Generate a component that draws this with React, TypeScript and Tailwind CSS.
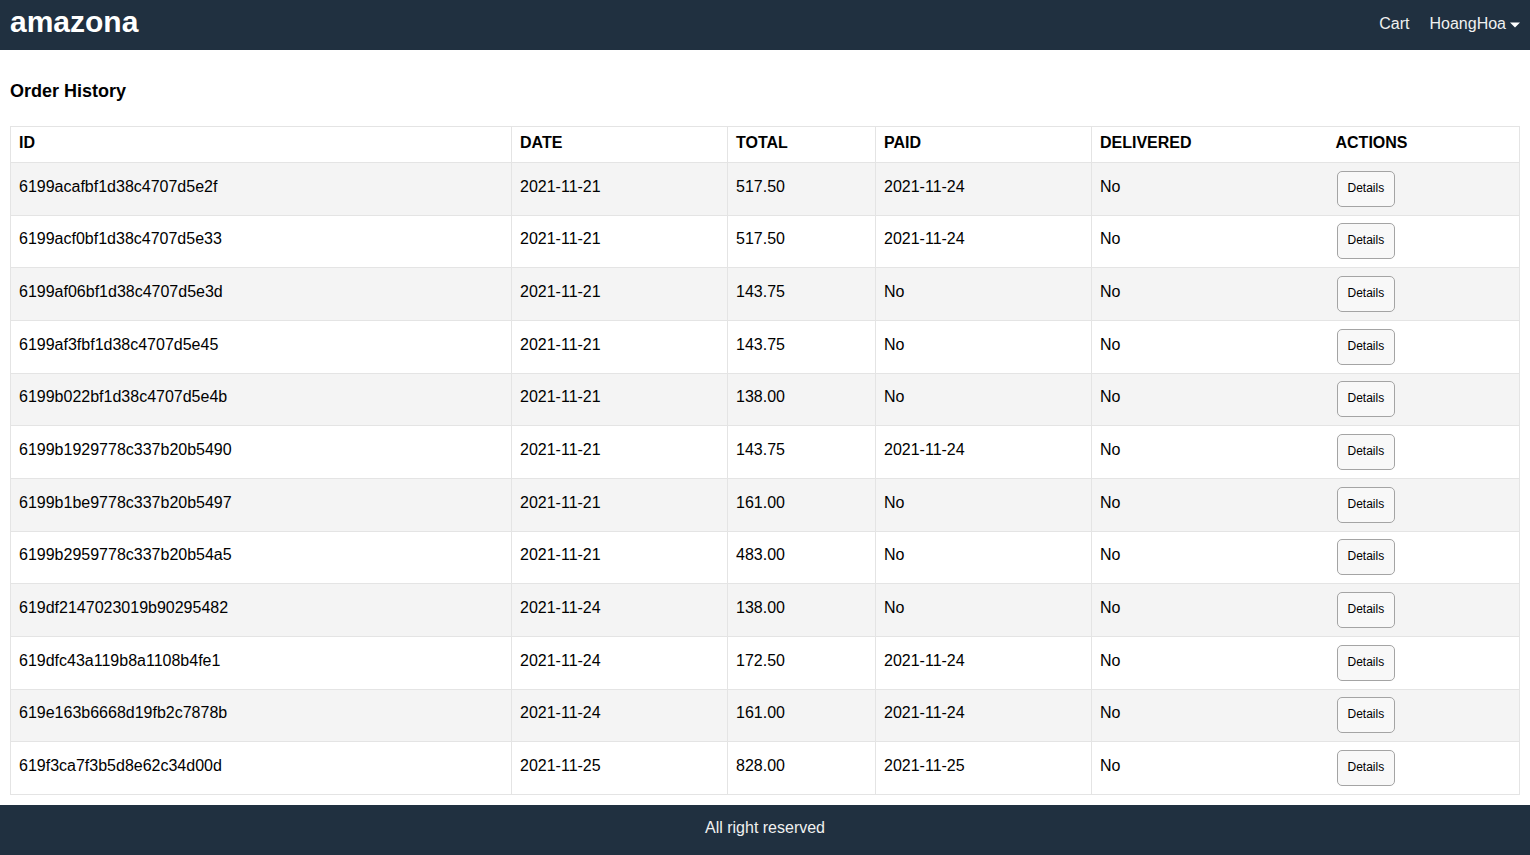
import { useState } from "react";

interface Order {
  id: string;
  date: string;
  total: string;
  paid: string;
  delivered: string;
}

const orders: Order[] = [
  { id: "6199acafbf1d38c4707d5e2f", date: "2021-11-21", total: "517.50", paid: "2021-11-24", delivered: "No" },
  { id: "6199acf0bf1d38c4707d5e33", date: "2021-11-21", total: "517.50", paid: "2021-11-24", delivered: "No" },
  { id: "6199af06bf1d38c4707d5e3d", date: "2021-11-21", total: "143.75", paid: "No", delivered: "No" },
  { id: "6199af3fbf1d38c4707d5e45", date: "2021-11-21", total: "143.75", paid: "No", delivered: "No" },
  { id: "6199b022bf1d38c4707d5e4b", date: "2021-11-21", total: "138.00", paid: "No", delivered: "No" },
  { id: "6199b1929778c337b20b5490", date: "2021-11-21", total: "143.75", paid: "2021-11-24", delivered: "No" },
  { id: "6199b1be9778c337b20b5497", date: "2021-11-21", total: "161.00", paid: "No", delivered: "No" },
  { id: "6199b2959778c337b20b54a5", date: "2021-11-21", total: "483.00", paid: "No", delivered: "No" },
  { id: "619df2147023019b90295482", date: "2021-11-24", total: "138.00", paid: "No", delivered: "No" },
  { id: "619dfc43a119b8a1108b4fe1", date: "2021-11-24", total: "172.50", paid: "2021-11-24", delivered: "No" },
  { id: "619e163b6668d19fb2c7878b", date: "2021-11-24", total: "161.00", paid: "2021-11-24", delivered: "No" },
  { id: "619f3ca7f3b5d8e62c34d00d", date: "2021-11-25", total: "828.00", paid: "2021-11-25", delivered: "No" },
];

function CaretDown() {
  return (
    <svg width="10" height="6" viewBox="0 0 10 6" className="ml-[4px] mt-[2px]">
      <path d="M0 0.5 L10 0.5 L5 5.5 Z" fill="#fff" />
    </svg>
  );
}

// text cells sit a touch above the middle of the row
const cell = "border border-[#e4e4e4] px-[8px] pb-[4px]";

export default function App() {
  const [selected, setSelected] = useState<string | null>(null);

  return (
    <div
      className="grid min-h-screen grid-rows-[50px_1fr_50px] text-[16px] text-black"
      style={{ fontFamily: '"Liberation Sans", Arial, Helvetica, sans-serif' }}
    >
      {/* Header */}
      <header className="flex items-center justify-between bg-[#203040]">
        <a href="#" className="px-[10px] pb-[6px] text-[30px] font-bold leading-[34px] text-white">
          amazona
        </a>
        <div className="flex items-center pb-[2px]">
          <a href="#" className="px-[10px] text-[#f0f0f0]">Cart</a>
          <a href="#" className="flex items-center pl-[10px] pr-[10px] text-[#f0f0f0]">
            HoangHoa
            <CaretDown />
          </a>
        </div>
      </header>

      {/* Main */}
      <main className="px-[10px] pb-[10px]">
        <h1 className="mt-[31px] mb-[24px] text-[18px] font-bold leading-[21px]">Order History</h1>
        <table className="w-full table-fixed border-collapse">
          <colgroup>
            <col className="w-[501px]" />
            <col className="w-[216px]" />
            <col className="w-[148px]" />
            <col className="w-[216px]" />
            <col className="w-[236px]" />
            <col />
          </colgroup>
          <thead>
            <tr className="h-[36px]">
              <th className={`${cell} text-left font-bold`}>ID</th>
              <th className={`${cell} text-left font-bold`}>DATE</th>
              <th className={`${cell} text-left font-bold`}>TOTAL</th>
              <th className={`${cell} text-left font-bold`}>PAID</th>
              <th className={`${cell} border-r-0 text-left font-bold`}>DELIVERED</th>
              <th className={`${cell} border-l-0 text-left font-bold`}>ACTIONS</th>
            </tr>
          </thead>
          <tbody>
            {orders.map((order, i) => (
              <tr key={order.id} className={i % 2 === 0 ? "h-[52.67px] bg-[#f4f4f4]" : "h-[52.67px] bg-white"}>
                <td className={cell}>{order.id}</td>
                <td className={cell}>{order.date}</td>
                <td className={cell}>{order.total}</td>
                <td className={cell}>{order.paid}</td>
                <td className={`${cell} border-r-0`}>{order.delivered}</td>
                <td className="border border-l-0 border-[#e4e4e4] px-[9px]">
                  <button
                    type="button"
                    onClick={() => setSelected(order.id)}
                    className={
                      selected === order.id
                        ? "rounded-[5px] border border-[#a4a4a4] bg-[#eeeeee] px-[10px] pt-[9px] pb-[11px] text-[12px] leading-[14px]"
                        : "rounded-[5px] border border-[#a4a4a4] bg-[#f8f8f8] px-[10px] pt-[9px] pb-[11px] text-[12px] leading-[14px]"
                    }
                  >
                    Details
                  </button>
                </td>
              </tr>
            ))}
          </tbody>
        </table>
      </main>

      {/* Footer */}
      <footer className="flex items-center justify-center bg-[#203040] pb-[4px] text-[#f0f0f0]">
        All right reserved
      </footer>
    </div>
  );
}
